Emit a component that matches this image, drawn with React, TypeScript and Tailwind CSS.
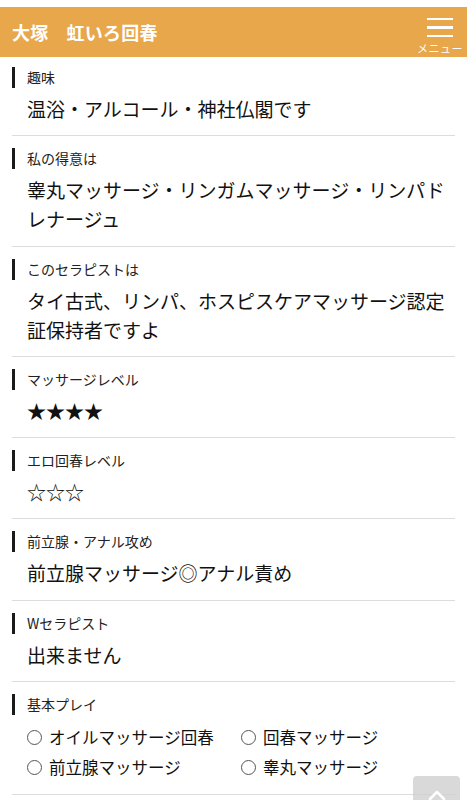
import type { ReactNode } from "react";

const FONT = {
  fontFamily: '"Noto Sans CJK JP", "Noto Sans", sans-serif',
};

type Item = {
  label: string;
  value: ReactNode;
};

const items: Item[] = [
  { label: "趣味", value: "温浴・アルコール・神社仏閣です" },
  { label: "私の得意は", value: "睾丸マッサージ・リンガムマッサージ・リンパドレナージュ" },
  { label: "このセラピストは", value: "タイ古式、リンパ、ホスピスケアマッサージ認定証保持者ですよ" },
  { label: "マッサージレベル", value: "★★★★" },
  { label: "エロ回春レベル", value: "☆☆☆" },
  { label: "前立腺・アナル攻め", value: "前立腺マッサージ◎アナル責め" },
  { label: "Wセラピスト", value: "出来ません" },
];

const plays = ["オイルマッサージ回春", "回春マッサージ", "前立腺マッサージ", "睾丸マッサージ"];

function Label({ children }: { children: ReactNode }) {
  return (
    <div className="flex h-[21px] items-center">
      <span className="h-[21px] w-[3px] bg-[#1a1a1a]" />
      <span className="ml-3 text-[14px] leading-[21px] text-[#222]">{children}</span>
    </div>
  );
}

function Section({ first, children }: { first?: boolean; children: ReactNode }) {
  return (
    <section className={`border-b border-[#dcdcdc] pb-[12.3px] ${first ? "pt-[10px]" : "pt-3"}`}>
      {children}
    </section>
  );
}

export default function App() {
  return (
    <div className="min-h-screen bg-white pt-[7px] text-[#111]" style={FONT}>
      <header className="flex h-[50px] items-center justify-between bg-[#e8a74b] pl-3 pr-[3px]">
        <h1 className="text-[18px] font-bold leading-none tracking-[0.2px] text-white">大塚　虹いろ回春</h1>
        <button type="button" className="flex w-[48px] flex-col items-center pt-[8px]" aria-label="メニュー">
          <span className="flex w-[26px] flex-col gap-[6px]">
            <span className="h-[2.5px] w-full bg-white" />
            <span className="h-[2.5px] w-full bg-white" />
            <span className="h-[2.5px] w-full bg-white" />
          </span>
          <span className="mt-[6px] whitespace-nowrap text-[11px] leading-none tracking-[0.5px] text-white">メニュー</span>
        </button>
      </header>

      <main className="px-3">
        {items.map((item, i) => (
          <Section key={item.label} first={i === 0}>
            <Label>{item.label}</Label>
            <p className="mt-[6px] pl-[15px] text-[19px] leading-[29px] text-[#111]">{item.value}</p>
          </Section>
        ))}
        <Section>
          <Label>基本プレイ</Label>
          <ul className="mt-[7px] grid grid-cols-2 pl-[15px]">
            {plays.map((play) => (
              <li key={play} className="flex h-[30px] items-center">
                <span className="h-[15px] w-[15px] shrink-0 rounded-full border border-[#555]" />
                <span className="ml-[7px] text-[16.5px] leading-[30px] text-[#111]">{play}</span>
              </li>
            ))}
          </ul>
        </Section>
      </main>

      <button
        type="button"
        aria-label="ページトップへ"
        className="fixed bottom-[-20px] right-[7px] flex h-[44px] w-[47px] items-start justify-center rounded-[4px] bg-[#cfcfcf]/80 pt-[14px]"
      >
        <svg width="18" height="10" viewBox="0 0 18 10" fill="none">
          <path d="M2 9 L9 2 L16 9" stroke="white" strokeWidth="2.5" strokeLinecap="round" strokeLinejoin="round" />
        </svg>
      </button>
    </div>
  );
}
